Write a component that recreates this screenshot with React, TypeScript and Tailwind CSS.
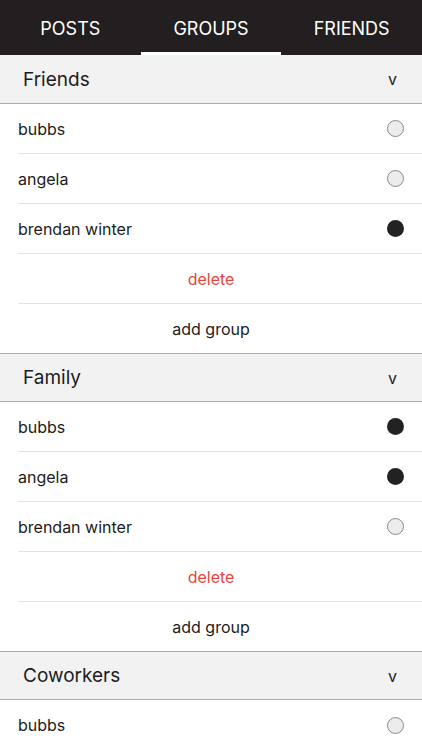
import React from 'react';

type Member = { name: string; on: boolean };
type Group = { title: string; members: Member[]; actions: boolean };

const groups: Group[] = [
  {
    title: 'Friends',
    actions: true,
    members: [
      { name: 'bubbs', on: false },
      { name: 'angela', on: false },
      { name: 'brendan winter', on: true },
    ],
  },
  {
    title: 'Family',
    actions: true,
    members: [
      { name: 'bubbs', on: true },
      { name: 'angela', on: true },
      { name: 'brendan winter', on: false },
    ],
  },
  {
    title: 'Coworkers',
    actions: false,
    members: [{ name: 'bubbs', on: false }],
  },
];

const tabs = ['POSTS', 'GROUPS', 'FRIENDS'];

function Dot({ on }: { on: boolean }) {
  return on ? (
    <span className="block w-[17px] h-[17px] rounded-full bg-[#222]" />
  ) : (
    <span className="block w-[17px] h-[17px] rounded-full bg-[#ececec] border border-[#8a8a8a]" />
  );
}

export default function App() {
  return (
    <div className="w-[422px] h-[750px] overflow-hidden bg-white text-[#1c1c1c]" style={{ fontFamily: 'Inter, "Liberation Sans", sans-serif' }}>
      <div className="h-[55px] bg-[#231f20] grid grid-cols-3">
        {tabs.map((t) => (
          <div key={t} className="relative flex items-center justify-center text-white text-[18px] pt-[1px]">
            {t}
            {t === 'GROUPS' && <span className="absolute left-0 right-0 bottom-0 h-[3px] bg-white" />}
          </div>
        ))}
      </div>
      {groups.map((g, gi) => (
        <div key={g.title}>
          <div
            className={`h-[49px] bg-[#f2f2f2] border-b border-[#ababab] flex items-center justify-between pl-[23px] pr-[25px] ${
              gi > 0 ? 'border-t' : ''
            }`}
          >
            <span className="text-[19px] pt-[2px]">{g.title}</span>
            <span className="text-[16px] text-[#222]">v</span>
          </div>
          {g.members.map((m, mi) => {
            const divider = g.actions || mi < g.members.length - 1;
            return (
              <div key={m.name} className="h-[50px] pl-[18px]">
                <div className={`h-full flex items-center justify-between pr-[18px] ${divider ? 'border-b border-[#e3e3e3]' : ''}`}>
                  <span className="text-[16px]">{m.name}</span>
                  <Dot on={m.on} />
                </div>
              </div>
            );
          })}
          {g.actions && (
            <>
              <div className="h-[50px] pl-[18px]">
                <div className="h-full border-b border-[#e3e3e3] flex items-center justify-center">
                  <span className="text-[16px] text-[#e8453c] -ml-[18px]">delete</span>
                </div>
              </div>
              <div className="h-[49px] flex items-center justify-center">
                <span className="text-[16px]">add group</span>
              </div>
            </>
          )}
        </div>
      ))}
    </div>
  );
}
